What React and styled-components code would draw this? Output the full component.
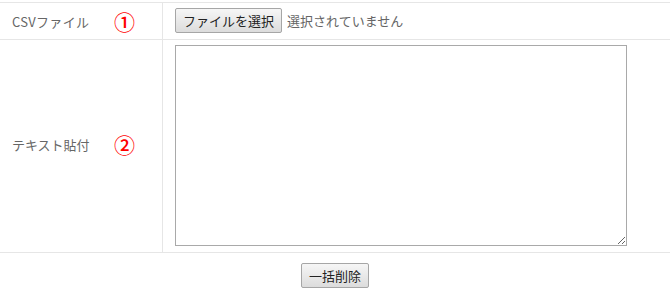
import React from 'react';
import styled, { createGlobalStyle } from 'styled-components';

const GlobalStyle = createGlobalStyle`
  body {
    margin: 0;
    background: #fff;
    font-family: "Noto Sans CJK JP", "Noto Sans", sans-serif;
    font-size: 13px;
    color: #555;
  }
`;

const Page = styled.div`
  padding-top: 2px;
  width: 670px;
`;

const Form = styled.div`
  display: grid;
  grid-template-columns: 163px 1fr;
  border-top: 1px solid #e6e6e6;
`;

const LabelCell = styled.div`
  display: flex;
  align-items: center;
  padding-left: 12px;
  border-right: 1px solid #e6e6e6;
  border-bottom: 1px solid #e6e6e6;
`;

const LabelText = styled.span`
  width: 102px;
  flex-shrink: 0;
  color: #666;
  letter-spacing: ${({ tight }) => (tight ? '0.3px' : '0')};
  margin-top: ${({ lift }) => (lift ? '-3px' : '0')};
`;

const Marker = styled.span`
  color: #f00;
  font-size: 21px;
  font-weight: 500;
  line-height: 1;
  margin-top: ${({ lift }) => (lift ? '-3px' : '0')};
`;

const FieldCell = styled.div`
  display: flex;
  align-items: center;
  gap: 5px;
  padding: 5px 12px 6px;
  border-bottom: 1px solid #e6e6e6;
`;

const Button = styled.button`
  height: 25px;
  padding: 0 7px;
  font: inherit;
  font-size: 13px;
  line-height: 23px;
  color: #222;
  background: linear-gradient(#f6f6f6, #dcdcdc);
  border: 1px solid #a6a6a6;
  border-radius: 2px;
  cursor: pointer;
`;

const Hint = styled.span`
  color: #666;
`;

const TextArea = styled.textarea`
  display: block;
  width: 452px;
  height: 201px;
  box-sizing: border-box;
  border: 1px solid #a9a9a9;
  padding: 2px;
  font: inherit;
  resize: both;
  outline: none;
`;

const Footer = styled.div`
  display: flex;
  justify-content: center;
  padding-top: 10px;
`;

const App = () => (
  <>
    <GlobalStyle />
    <Page>
      <Form>
        <LabelCell>
          <LabelText tight>CSVファイル</LabelText>
          <Marker>①</Marker>
        </LabelCell>
        <FieldCell>
          <Button type="button">ファイルを選択</Button>
          <Hint>選択されていません</Hint>
        </FieldCell>

        <LabelCell>
          <LabelText lift>テキスト貼付</LabelText>
          <Marker lift>②</Marker>
        </LabelCell>
        <FieldCell>
          <TextArea />
        </FieldCell>
      </Form>
      <Footer>
        <Button type="button">一括削除</Button>
      </Footer>
    </Page>
  </>
);

export default App;
